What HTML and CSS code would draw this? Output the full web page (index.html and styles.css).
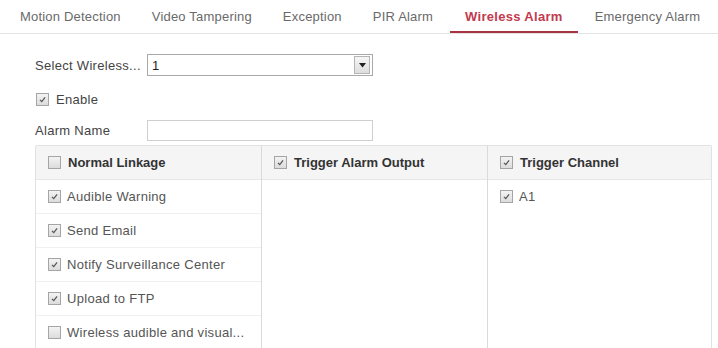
FILE: index.html
```html
<!DOCTYPE html>
<html>
<head>
<meta charset="utf-8">
<link rel="stylesheet" href="styles.css">
</head>
<body>
<div class="page">
  <div class="tabs">
    <div class="tab">Motion Detection</div>
    <div class="tab">Video Tampering</div>
    <div class="tab">Exception</div>
    <div class="tab">PIR Alarm</div>
    <div class="tab active">Wireless Alarm</div>
    <div class="tab">Emergency Alarm</div>
  </div>
  <div class="form">
    <div class="row">
      <span class="label">Select Wireless...</span>
      <div class="select"><span class="val">1</span><span class="btn"><svg width="7" height="5" viewBox="0 0 7 5"><path d="M0 0H7L3.5 4.5Z" fill="#222"/></svg></span></div>
    </div>
    <div class="row enable">
      <span class="cb checked"><svg viewBox="0 0 12 12"><path d="M3.2 6.4L5.2 8.4L8.8 3.6" fill="none" stroke="#555" stroke-width="1.3"/></svg></span>
      <span class="cbtext">Enable</span>
    </div>
    <div class="row">
      <span class="label">Alarm Name</span>
      <div class="input"></div>
    </div>
  </div>
  <div class="grid">
    <div class="col">
      <div class="head"><span class="cb"></span><span class="htext">Normal Linkage</span></div>
      <div class="item"><span class="cb checked"><svg viewBox="0 0 12 12"><path d="M3.2 6.4L5.2 8.4L8.8 3.6" fill="none" stroke="#555" stroke-width="1.3"/></svg></span><span>Audible Warning</span></div>
      <div class="item"><span class="cb checked"><svg viewBox="0 0 12 12"><path d="M3.2 6.4L5.2 8.4L8.8 3.6" fill="none" stroke="#555" stroke-width="1.3"/></svg></span><span>Send Email</span></div>
      <div class="item"><span class="cb checked"><svg viewBox="0 0 12 12"><path d="M3.2 6.4L5.2 8.4L8.8 3.6" fill="none" stroke="#555" stroke-width="1.3"/></svg></span><span>Notify Surveillance Center</span></div>
      <div class="item"><span class="cb checked"><svg viewBox="0 0 12 12"><path d="M3.2 6.4L5.2 8.4L8.8 3.6" fill="none" stroke="#555" stroke-width="1.3"/></svg></span><span>Upload to FTP</span></div>
      <div class="item"><span class="cb"></span><span>Wireless audible and visual...</span></div>
    </div>
    <div class="col">
      <div class="head"><span class="cb checked"><svg viewBox="0 0 12 12"><path d="M3.2 6.4L5.2 8.4L8.8 3.6" fill="none" stroke="#555" stroke-width="1.3"/></svg></span><span class="htext">Trigger Alarm Output</span></div>
    </div>
    <div class="col">
      <div class="head"><span class="cb checked"><svg viewBox="0 0 12 12"><path d="M3.2 6.4L5.2 8.4L8.8 3.6" fill="none" stroke="#555" stroke-width="1.3"/></svg></span><span class="htext">Trigger Channel</span></div>
      <div class="item plain"><span class="cb checked"><svg viewBox="0 0 12 12"><path d="M3.2 6.4L5.2 8.4L8.8 3.6" fill="none" stroke="#555" stroke-width="1.3"/></svg></span><span>A1</span></div>
    </div>
  </div>
</div>
</body>
</html>
```
FILE: styles.css
```css
html, body {
  margin: 0;
  padding: 0;
  background: #fff;
}
body {
  font-family: "Liberation Sans", Arial, sans-serif;
  font-size: 13px;
  color: #444;
  letter-spacing: 0.3px;
}
.page {
  width: 718px;
  height: 348px;
  overflow: hidden;
}
.tabs {
  display: flex;
  height: 33px;
  border-bottom: 1px solid #e4e4e4;
  padding-left: 6px;
  gap: 3px;
}
.tab {
  padding: 0 14px;
  line-height: 33px;
  height: 31px;
  color: #6a6a6a;
  letter-spacing: 0.2px;
  white-space: nowrap;
}
.tab.active {
  color: #c23a4e;
  border-bottom: 2px solid #a8343f;
  font-weight: bold;
  letter-spacing: 0.3px;
  padding: 0 15px;
}
.form {
  padding: 20px 0 0 35px;
}
.row {
  display: flex;
  align-items: center;
  height: 22px;
}
.row + .row {
  margin-top: 11px;
}
.row.enable {
  height: 24px;
  margin-top: 11px;
  padding-left: 1px;
}
.row.enable + .row {
  margin-top: 8px;
}
.label {
  width: 112px;
  color: #444;
}
.select {
  width: 224px;
  height: 20px;
  border: 1px solid #a9a9a9;
  display: flex;
  align-items: center;
  justify-content: space-between;
  background: #fff;
}
.select .val {
  padding-left: 4px;
  color: #222;
}
.select .btn {
  width: 14px;
  height: 16px;
  margin-right: 2px;
  border: 1px solid #b5b5b5;
  background: linear-gradient(#f6f6f6, #dedede);
  display: flex;
  align-items: center;
  justify-content: center;
}
.input {
  width: 224px;
  height: 19px;
  border: 1px solid #cfcfcf;
  background: #fff;
}
.cb {
  width: 11px;
  height: 11px;
  border: 1px solid #a5a5a5;
  background: linear-gradient(#f3f3f3, #dcdcdc);
  display: inline-flex;
  flex: none;
}
.cb svg {
  width: 11px;
  height: 11px;
}
.cbtext {
  margin-left: 7px;
}
.grid {
  margin: 4px 0 0 35px;
  width: 675px;
  display: grid;
  grid-template-columns: 225px 226px 224px;
  border: 1px solid #e2e2e2;
  border-bottom: none;
  border-radius: 2px 2px 0 0;
  height: 220px;
}
.col {
  border-left: 1px solid #dadada;
}
.col:first-child {
  border-left: none;
}
.head {
  height: 33px;
  background: #f5f5f5;
  border-bottom: 1px solid #e6e6e6;
  display: flex;
  align-items: center;
  padding-left: 12px;
  letter-spacing: 0;
}
.htext {
  font-weight: bold;
  color: #333;
  margin-left: 7px;
}
.item {
  height: 33px;
  display: flex;
  align-items: center;
  padding-left: 12px;
  border-bottom: 1px solid #f0f0f0;
  color: #555;
}
.item .cb {
  margin-right: 6px;
}
.item.plain {
  border-bottom: none;
}
```
